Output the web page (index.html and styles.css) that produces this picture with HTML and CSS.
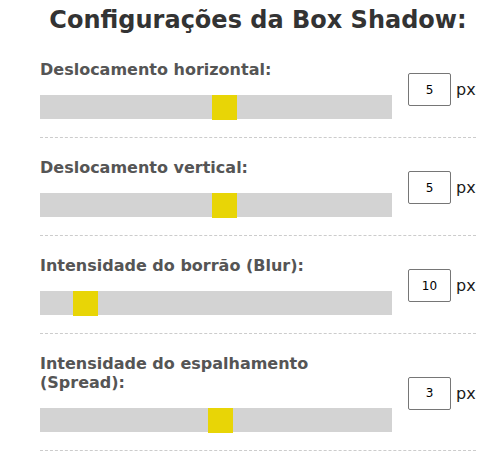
FILE: index.html
```html
<!DOCTYPE html>
<html lang="pt">
<head>
<meta charset="utf-8">
<title>Configurações da Box Shadow</title>
<link rel="stylesheet" href="styles.css">
</head>
<body>
<div class="panel">
  <h2 class="title">Configurações da Box Shadow:</h2>

  <div class="row">
    <div class="control">
      <label class="label" for="h">Deslocamento horizontal:</label>
      <input id="h" class="slider" type="range" min="-100" max="100" value="5">
    </div>
    <div class="value"><input class="num" type="text" value="5"><span class="unit">px</span></div>
  </div>

  <div class="row">
    <div class="control">
      <label class="label" for="v">Deslocamento vertical:</label>
      <input id="v" class="slider" type="range" min="-100" max="100" value="5">
    </div>
    <div class="value"><input class="num" type="text" value="5"><span class="unit">px</span></div>
  </div>

  <div class="row">
    <div class="control">
      <label class="label" for="b">Intensidade do borrão (Blur):</label>
      <input id="b" class="slider" type="range" min="0" max="100" value="10">
    </div>
    <div class="value"><input class="num" type="text" value="10"><span class="unit">px</span></div>
  </div>

  <div class="row">
    <div class="control">
      <label class="label" for="s">Intensidade do espalhamento (Spread):</label>
      <input id="s" class="slider" type="range" min="-100" max="100" value="3">
    </div>
    <div class="value"><input class="num" type="text" value="3"><span class="unit">px</span></div>
  </div>
</div>
</body>
</html>
```

FILE: styles.css
```css
html, body {
  margin: 0;
  padding: 0;
  background: #ffffff;
}

body {
  font-family: "DejaVu Sans", Verdana, sans-serif;
}

.panel {
  width: 436px;
  margin-left: 40px;
}

.title {
  margin: 6px 0 6px;
  font-size: 24px;
  line-height: 28px;
  font-weight: bold;
  color: #333333;
  text-align: center;
}

.row {
  display: flex;
  align-items: center;
  gap: 16px;
  padding: 20px 0 18px;
  border-bottom: 1px dashed #cccccc;
}

.control {
  flex: 0 0 352px;
  display: flex;
  flex-direction: column;
}

.label {
  display: block;
  font-size: 16px;
  line-height: 19px;
  font-weight: bold;
  color: #555555;
  margin-bottom: 16px;
}

.slider {
  -webkit-appearance: none;
  appearance: none;
  display: block;
  width: 100%;
  height: 24px;
  margin: 0;
  background: #d3d3d3;
  outline: none;
}

.slider::-webkit-slider-thumb {
  -webkit-appearance: none;
  appearance: none;
  width: 25px;
  height: 25px;
  background: #e8d506;
  border: none;
  cursor: pointer;
}

.value {
  display: flex;
  align-items: center;
  gap: 5px;
}

.num {
  box-sizing: border-box;
  width: 43px;
  height: 33px;
  padding: 0;
  border: 1px solid #767676;
  border-radius: 2px;
  font-family: "DejaVu Sans", sans-serif;
  font-size: 12px;
  color: #000000;
  text-align: center;
}

.unit {
  font-family: "DejaVu Sans", sans-serif;
  font-size: 16px;
  color: #1a1a1a;
}
```
